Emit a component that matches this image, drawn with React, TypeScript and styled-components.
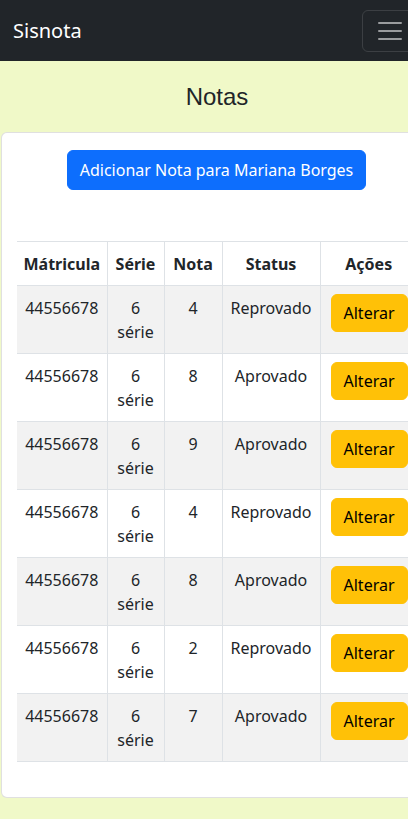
import React from "react";
import styled, { createGlobalStyle } from "styled-components";

const GlobalStyle = createGlobalStyle`
  * { box-sizing: border-box; }
  body {
    margin: 0;
    font-family: "Noto Sans", "Open Sans", sans-serif;
    font-size: 16px;
    line-height: 1.5;
    color: #212529;
    background: #f0f9c8;
  }
`;

const Page = styled.div`
  width: 434px;
  min-height: 819px;
  background: #f0f9c8;
`;

const Navbar = styled.nav`
  height: 61px;
  background: #212529;
  display: flex;
  align-items: center;
  justify-content: space-between;
  padding: 0 16px 0 13px;
`;

const Brand = styled.a`
  color: #fff;
  font-size: 20px;
  text-decoration: none;
`;

const Toggler = styled.button`
  width: 56px;
  height: 42px;
  margin-top: 1px;
  background: transparent;
  border: 1px solid rgba(255, 255, 255, 0.12);
  border-radius: 6px;
  display: flex;
  align-items: center;
  justify-content: center;
  padding: 0;
`;

const Heading = styled.h1`
  margin: 0;
  padding: 19px 0 18px;
  text-align: center;
  font-family: "Liberation Sans", Arial, sans-serif;
  font-weight: 400;
  font-size: 24px;
  line-height: 34px;
  color: #212529;
`;

const Card = styled.div`
  margin: 0 1px;
  background: #fff;
  border: 1px solid rgba(0, 0, 0, 0.12);
  border-radius: 6px;
  padding: 17px 16px 35px 15px;
`;

const Center = styled.div`
  display: flex;
  justify-content: center;
  margin-bottom: 51px;
`;

const Button = styled.button<{ $variant: "primary" | "warning" }>`
  font-family: inherit;
  font-size: 16px;
  line-height: 24px;
  border-radius: 6px;
  border: 1px solid ${(p) => (p.$variant === "primary" ? "#0d6efd" : "#ffc107")};
  background: ${(p) => (p.$variant === "primary" ? "#0d6efd" : "#ffc107")};
  color: ${(p) => (p.$variant === "primary" ? "#fff" : "#000")};
  padding: ${(p) => (p.$variant === "primary" ? "7px 12px" : "6px 12px")};
  cursor: pointer;
`;

const Table = styled.table`
  width: 400px;
  border-collapse: collapse;
  table-layout: fixed;
`;

const Th = styled.th`
  padding: 10px 4px 9px;
  font-weight: 700;
  text-align: center;
  border-top: 1px solid #dee2e6;
  border-bottom: 1px solid #dee2e6;
  border-left: 1px solid #dee2e6;
  &:first-child { border-left: none; }
`;

const Row = styled.tr<{ $striped: boolean }>`
  background: ${(p) => (p.$striped ? "#f2f2f2" : "#fff")};
`;

const Td = styled.td`
  padding: 10px 6px 9px;
  text-align: center;
  vertical-align: top;
  border-bottom: 1px solid #dee2e6;
  border-left: 1px solid #dee2e6;
  &:first-child { border-left: none; }
`;

const ActionTd = styled(Td)`
  text-align: left;
  padding: 8px 10px;
`;

const notas = [
  { nota: 4, status: "Reprovado" },
  { nota: 8, status: "Aprovado" },
  { nota: 9, status: "Aprovado" },
  { nota: 4, status: "Reprovado" },
  { nota: 8, status: "Aprovado" },
  { nota: 2, status: "Reprovado" },
  { nota: 7, status: "Aprovado" },
];

const App = () => {
  return (
    <Page>
      <GlobalStyle />
      <Navbar>
        <Brand href="#">Sisnota</Brand>
        <Toggler aria-label="menu">
          <svg width="30" height="30" viewBox="0 0 30 30">
            <path
              d="M4 7h22M4 15h22M4 23h22"
              stroke="rgba(255,255,255,0.55)"
              strokeWidth="2"
              strokeLinecap="round"
            />
          </svg>
        </Toggler>
      </Navbar>
      <Heading>Notas</Heading>
      <Card>
        <Center>
          <Button $variant="primary">Adicionar Nota para Mariana Borges</Button>
        </Center>
        <Table>
          <colgroup>
            <col style={{ width: 90 }} />
            <col style={{ width: 57 }} />
            <col style={{ width: 58 }} />
            <col style={{ width: 98 }} />
            <col style={{ width: 97 }} />
          </colgroup>
          <thead>
            <tr>
              <Th>Mátricula</Th>
              <Th>Série</Th>
              <Th>Nota</Th>
              <Th>Status</Th>
              <Th>Ações</Th>
            </tr>
          </thead>
          <tbody>
            {notas.map((n, i) => (
              <Row key={i} $striped={i % 2 === 0}>
                <Td>44556678</Td>
                <Td>6 série</Td>
                <Td>{n.nota}</Td>
                <Td>{n.status}</Td>
                <ActionTd>
                  <Button $variant="warning">Alterar</Button>
                </ActionTd>
              </Row>
            ))}
          </tbody>
        </Table>
      </Card>
    </Page>
  );
};

export default App;
